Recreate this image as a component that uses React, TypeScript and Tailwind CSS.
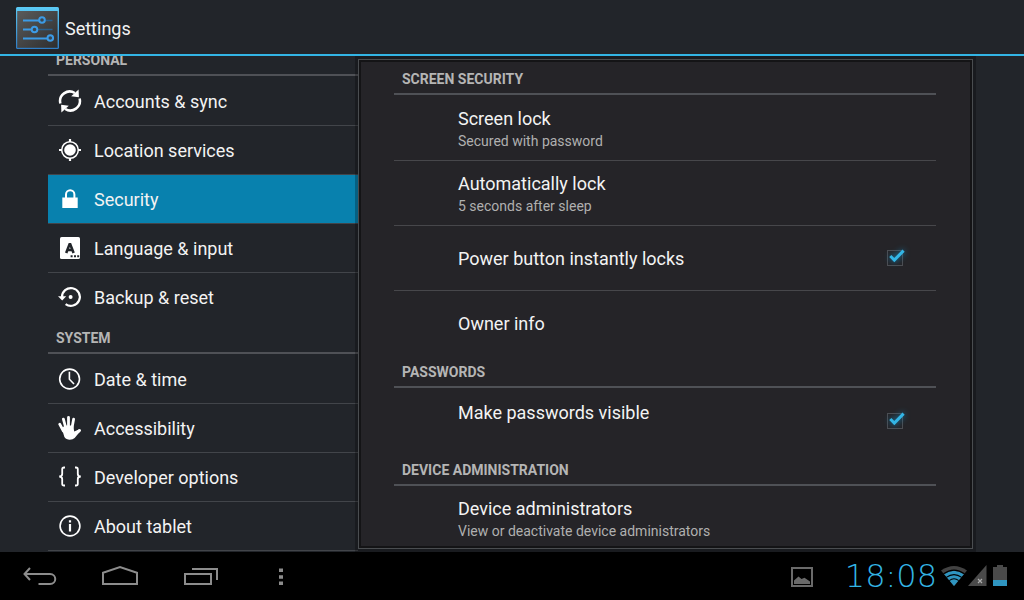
import React, { useState } from "react";

type IconProps = { className?: string };

function SettingsLogo() {
  return (
    <svg viewBox="0 0 44 44" className="h-11 w-11" aria-hidden="true">
      <defs>
        <linearGradient id="plate" x1="0" y1="0" x2="1" y2="1">
          <stop offset="0" stopColor="#5a5b5b" />
          <stop offset="1" stopColor="#2e2e2f" />
        </linearGradient>
        <linearGradient id="edge" x1="0" y1="0" x2="0" y2="1">
          <stop offset="0" stopColor="#5ccbf6" />
          <stop offset="1" stopColor="#2e7cc4" />
        </linearGradient>
      </defs>
      <rect x="1" y="1" width="43" height="42" rx="1.5" fill="url(#edge)" />
      <rect x="2.2" y="5" width="40.4" height="36.8" fill="url(#plate)" />
      <g stroke="#2a5f8c" strokeWidth="1.6">
        <path d="M30 14.5h7.5M22 23.5h15.5" />
      </g>
      <g stroke="#3c9be6" strokeWidth="2" fill="#3b4750">
        <path d="M8 14.5h16M8 23.5h9M8 32.5h24" />
        <circle cx="27" cy="14" r="2.8" />
        <circle cx="19.5" cy="23.5" r="2.8" />
        <circle cx="35.3" cy="32" r="2.8" />
      </g>
    </svg>
  );
}

function SyncIcon({ className }: IconProps) {
  return (
    <svg viewBox="0 0 24 24" className={className} aria-hidden="true">
      <g fill="none" stroke="currentColor" strokeWidth="2.5">
        <path d="M2.4 14.5A9.6 9.6 0 0 1 16.8 4" />
        <path d="M21.6 9.5A9.6 9.6 0 0 1 7.2 20" />
      </g>
      <path d="M20.6 0.6 20.9 8.2 13.2 7.2Z" fill="currentColor" />
      <path d="M3.4 23.4 3.1 15.8 10.8 16.8Z" fill="currentColor" />
    </svg>
  );
}

function LocationIcon({ className }: IconProps) {
  return (
    <svg viewBox="0 0 24 24" className={className} aria-hidden="true">
      <circle cx="12" cy="12" r="5.8" fill="currentColor" />
      <circle cx="12" cy="12" r="8.3" fill="none" stroke="currentColor" strokeWidth="1.5" />
      <path
        d="M12 1v3M12 20v3M1 12h3M20 12h3"
        stroke="currentColor"
        strokeWidth="2.2"
      />
    </svg>
  );
}

function LockIcon({ className }: IconProps) {
  return (
    <svg viewBox="0 0 24 24" className={className} aria-hidden="true">
      <rect x="4.3" y="10.5" width="15.4" height="10.5" fill="currentColor" />
      <path
        d="M8 11V7.4a4.2 4.2 0 0 1 8.4 0V11"
        fill="none"
        stroke="currentColor"
        strokeWidth="2"
      />
    </svg>
  );
}

function LanguageIcon({ className }: IconProps) {
  return (
    <svg viewBox="0 0 24 24" className={className} aria-hidden="true">
      <rect x="2" y="1" width="20" height="22" rx="1.6" fill="currentColor" />
      <path
        d="M8.2 17 11.9 7.4 15.6 17M9.8 14h4.2"
        fill="none"
        stroke="#22252a"
        strokeWidth="2.6"
        strokeLinejoin="bevel"
      />
      <path d="M12.6 19.2h2v2h-2zM16 19.2h2v2h-2zM19.2 19.2h2v2h-2z" fill="#22252a" />
    </svg>
  );
}

function BackupIcon({ className }: IconProps) {
  return (
    <svg viewBox="0 0 24 24" className={className} aria-hidden="true">
      <path
        d="M4 12.2A8.9 8.9 0 1 1 7.6 19.1"
        fill="none"
        stroke="currentColor"
        strokeWidth="2.2"
      />
      <path d="M0 11.2h8.2L4.2 15.6Z" fill="currentColor" />
      <circle cx="12.6" cy="12" r="2" fill="currentColor" />
    </svg>
  );
}

function ClockIcon({ className }: IconProps) {
  return (
    <svg viewBox="0 0 24 24" className={className} aria-hidden="true">
      <g fill="none" stroke="currentColor" strokeWidth="1.6">
        <circle cx="11.6" cy="12" r="9.9" />
        <path d="M11.4 4.8V12.2L16 17" />
      </g>
    </svg>
  );
}

function HandIcon({ className }: IconProps) {
  return (
    <svg viewBox="0 0 24 24" className={className} aria-hidden="true">
      <g stroke="currentColor" strokeWidth="2.8" strokeLinecap="round" fill="none">
        <path d="M1.8 8.3 5.4 15" />
        <path d="M5.4 3.2 7.8 12" />
        <path d="M10.5 1.4V12" />
        <path d="M15.6 3.2 14 12" />
        <path d="M21.6 14.4 17 18" />
      </g>
      <path
        d="M3.8 12.5 6.6 9.5 15.2 9.5 16.2 15.4 21 13.4 22.4 15.4C19.6 17.8 17.5 22 14.6 23.3 11.6 24.3 8 23.8 6.4 21Z"
        fill="currentColor"
      />
    </svg>
  );
}

function BracesIcon({ className }: IconProps) {
  return (
    <svg viewBox="0 0 24 24" className={className} aria-hidden="true">
      <g fill="none" stroke="currentColor" strokeWidth="1.8">
        <path d="M7 2.5H6Q4.2 2.5 4.2 4.3V9.1Q4.2 11.5 1.2 11.5 4.2 11.5 4.2 13.9V18.7Q4.2 20.5 6 20.5H7" />
        <path d="M17 2.5H18Q19.8 2.5 19.8 4.3V9.1Q19.8 11.5 22.8 11.5 19.8 11.5 19.8 13.9V18.7Q19.8 20.5 18 20.5H17" />
      </g>
    </svg>
  );
}

function InfoIcon({ className }: IconProps) {
  return (
    <svg viewBox="0 0 24 24" className={className} aria-hidden="true">
      <circle cx="12" cy="12" r="9.9" fill="none" stroke="currentColor" strokeWidth="1.6" />
      <path d="M10.9 6.2h2.2v2.2h-2.2zM10.9 10h2.2v7.6h-2.2z" fill="currentColor" />
    </svg>
  );
}

const personal = [
  { label: "Accounts & sync", icon: SyncIcon },
  { label: "Location services", icon: LocationIcon },
  { label: "Security", icon: LockIcon },
  { label: "Language & input", icon: LanguageIcon },
  { label: "Backup & reset", icon: BackupIcon },
];

const system = [
  { label: "Date & time", icon: ClockIcon },
  { label: "Accessibility", icon: HandIcon },
  { label: "Developer options", icon: BracesIcon },
  { label: "About tablet", icon: InfoIcon },
];

function SectionTitle({ children }: { children: React.ReactNode }) {
  return (
    <h2 className="flex h-[33px] shrink-0 items-center border-b-2 border-[#4f5156] px-2 pt-0.5 text-sm font-bold text-[#b5b5b5]">
      {children}
    </h2>
  );
}

function NavList({
  items,
  selected,
  onSelect,
}: {
  items: typeof personal;
  selected: string;
  onSelect: (label: string) => void;
}) {
  return (
    <ul>
      {items.map(({ label, icon: Icon }) => (
        <li key={label} className="border-t border-[#42454a] first:border-transparent">
          <button
            type="button"
            onClick={() => onSelect(label)}
            className={`flex h-12 w-full items-center gap-3 px-2.5 text-left text-lg text-[#f3f3f3] ${
              selected === label ? "bg-[#0881ae]" : ""
            }`}
          >
            <Icon className="h-6 w-6 text-white" />
            <span className="pt-0.5">{label}</span>
          </button>
        </li>
      ))}
    </ul>
  );
}

function Preference({ title, summary }: { title: string; summary?: string }) {
  return (
    <button
      type="button"
      className="flex h-16 w-full flex-col justify-center pl-16 pt-0.5 text-left"
    >
      <span className="text-lg leading-6 text-[#f3f3f3]">{title}</span>
      {summary && <span className="text-sm leading-5 text-[#b0b0b0]">{summary}</span>}
    </button>
  );
}

function CheckPreference({
  id,
  title,
  spaced,
}: {
  id: string;
  title: string;
  spaced?: boolean;
}) {
  const [checked, setChecked] = useState(true);

  return (
    <div className="flex h-16 items-center justify-between pl-16 pr-[31px]">
      <label htmlFor={id} className={`text-lg leading-6 text-[#f3f3f3] ${spaced ? "pb-4" : "pt-0.5"}`}>
        {title}
      </label>
      <span className="relative h-5 w-5">
        <input
          id={id}
          type="checkbox"
          checked={checked}
          onChange={(e) => setChecked(e.target.checked)}
          className="m-0.5 block h-4 w-4 appearance-none border border-[#4c4d52]"
        />
        {checked && (
          <svg
            viewBox="0 0 20 20"
            className="pointer-events-none absolute inset-0 h-5 w-5 overflow-visible drop-shadow-[0_0_3px_#1583b5]"
            aria-hidden="true"
          >
            <path d="M5.3 8 9.3 12 18.6 2.6" fill="none" stroke="#33b5e5" strokeWidth="3" />
          </svg>
        )}
      </span>
    </div>
  );
}

function SystemBar() {
  return (
    <footer className="flex h-12 shrink-0 items-center justify-between bg-black text-[#8c8c8c]">
      <nav className="flex">
        <button type="button" aria-label="Back" className="flex h-12 w-20 items-center justify-center pt-0.5">
          <svg viewBox="0 0 36 24" className="h-6 w-9" fill="none" stroke="currentColor" strokeWidth="2">
            <path d="M8 3 2.5 9 8 15M3 9H28C35 9 35 19 28 19H16.5" />
          </svg>
        </button>
        <button type="button" aria-label="Home" className="flex h-12 w-20 items-center justify-center pt-0.5">
          <svg viewBox="0 0 36 24" className="h-6 w-9" fill="none" stroke="currentColor" strokeWidth="2">
            <path d="M1 19V7.7L18 2 35 7.7V19Z" />
          </svg>
        </button>
        <button type="button" aria-label="Recent apps" className="flex h-12 w-20 items-center justify-center pt-0.5">
          <svg viewBox="0 0 36 24" className="h-6 w-9" fill="none" stroke="currentColor" strokeWidth="2">
            <path d="M3 9H29V19H3ZM10 4H35V15" />
          </svg>
        </button>
        <button type="button" aria-label="Menu" className="flex h-12 w-20 items-center justify-center pl-0.5 pt-0.5">
          <svg viewBox="0 0 4 24" className="h-6 w-1" fill="currentColor">
            <path d="M0 3.5h4v3.5H0zM0 10.2h4v3.5H0zM0 16.5h4V20H0z" />
          </svg>
        </button>
      </nav>
      <div className="flex items-center pr-[17px]">
        <svg viewBox="0 0 22 20" className="mr-8 mt-0.5 h-5 w-[22px]" aria-hidden="true">
          <rect x="1" y="1" width="20" height="18" fill="none" stroke="#6a6a6a" strokeWidth="2" />
          <path d="M3 17V13.5L7.5 9.5 10.5 12 13.5 10.8 19 14.5V17Z" fill="#6a6a6a" />
        </svg>
        <time className="mr-1 font-['DejaVu_Sans'] text-[32px] font-extralight leading-none text-[#33b5e5]">
          18:08
        </time>
        <svg viewBox="0 0 26 20" className="h-5 w-[26px]" aria-hidden="true">
          <path d="M13 20 0 4.5Q13-4.5 26 4.5Z" fill="#424242" />
          <path d="M13 20 3.2 8.2Q13 1.4 22.8 8.2Z" fill="#2f95c0" />
          <g fill="none" stroke="#000" strokeWidth="1.1">
            <path d="M2.5 7.8Q13 0.4 23.5 7.8" />
            <path d="M5.3 11.4Q13 5.9 20.7 11.4" />
            <path d="M8.2 14.6Q13 11 17.8 14.6" />
          </g>
        </svg>
        <svg viewBox="0 0 20 22" className="mr-1.5 h-[22px] w-5" aria-hidden="true">
          <path d="M1 21 19.5 0V21Z" fill="#4a4a4a" />
          <path d="M11 14 15 18M15 14 11 18" stroke="#b0b0b0" strokeWidth="1.2" />
        </svg>
        <svg viewBox="0 0 14 22" className="h-[22px] w-3.5" aria-hidden="true">
          <path d="M4 0h6v2h4v19H0V2h4z" fill="#4a4a4a" />
          <rect y="15" width="14" height="6" fill="#2f95c0" />
        </svg>
      </div>
    </footer>
  );
}

export default function App() {
  const [selected, setSelected] = useState("Security");

  return (
    <div className="flex h-screen flex-col overflow-hidden bg-[#22252a] font-[Roboto,sans-serif]">
      <header className="flex h-14 shrink-0 items-center gap-1.5 border-b-2 border-[#33b5e5] px-[15px] pt-0.5 text-lg text-[#f3f3f3]">
        <SettingsLogo />
        <h1 className="pt-0.5">Settings</h1>
      </header>

      <main className="flex min-h-0 flex-1 pl-12 pr-[51px]">
        <nav className="w-[310px] shrink-0 overflow-hidden">
          <div className="-mt-[13px] border-b border-[#42454a]">
            <SectionTitle>PERSONAL</SectionTitle>
            <NavList items={personal} selected={selected} onSelect={setSelected} />
            <SectionTitle>SYSTEM</SectionTitle>
            <NavList items={system} selected={selected} onSelect={setSelected} />
          </div>
        </nav>

        <section className="relative my-[3px] flex-1 overflow-hidden border border-[#4a4d50] bg-[#252428] pl-[35px] pr-9 pt-0.5 shadow-[0_0_0_3px_rgba(0,0,0,0.25),inset_0_0_0_2px_#141416]">
          <SectionTitle>SCREEN SECURITY</SectionTitle>
          <div className="*:border-t *:border-[#47474b] *:first:border-transparent">
            <div>
              <Preference title="Screen lock" summary="Secured with password" />
            </div>
            <div>
              <Preference title="Automatically lock" summary="5 seconds after sleep" />
            </div>
            <div>
              <CheckPreference id="power-lock" title="Power button instantly locks" />
            </div>
            <div>
              <Preference title="Owner info" />
            </div>
          </div>
          <SectionTitle>PASSWORDS</SectionTitle>
          <div className="pt-px">
            <CheckPreference id="visible-passwords" title="Make passwords visible" spaced />
          </div>
          <SectionTitle>DEVICE ADMINISTRATION</SectionTitle>
          <Preference
            title="Device administrators"
            summary="View or deactivate device administrators"
          />
        </section>
      </main>

      <SystemBar />
    </div>
  );
}
